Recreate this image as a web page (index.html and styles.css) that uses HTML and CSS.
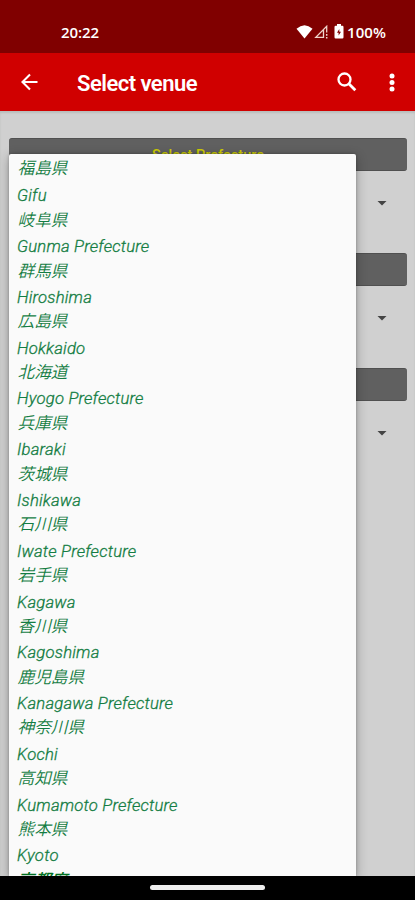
FILE: index.html
```html
<!DOCTYPE html>
<html lang="en">
<head>
<meta charset="utf-8">
<meta name="viewport" content="width=device-width">
<title>Select venue</title>
<link rel="stylesheet" href="styles.css">
</head>
<body>
<div class="screen">
  <header class="status">
    <span class="time">20:22</span>
    <div class="indicators">
      <svg class="wifi" viewBox="0 0 17 14"><path d="M.5 3.7Q8.500-3.300 16.500 3.700L8.500 13.500Z" fill="#fff"/></svg>
      <svg class="signal" viewBox="0 0 15 14"><path d="M9.500 5V12.300H1.800L12.700 1.300V7.500" fill="none" stroke="#efd5cb" stroke-width="1.300"/><path d="M12.700 9v1.800M12.700 11.900v1.500" stroke="#efd5cb" stroke-width="1.500"/></svg>
      <svg class="battery" viewBox="0 0 10 15"><path d="M3 0h4v1.700h1.300q1.200 0 1.200 1.200v10.400q0 1.200-1.200 1.200H1.700q-1.200 0-1.200-1.200V2.900q0-1.200 1.200-1.200H3z" fill="#fff"/><path d="M5.300 5L3 8.800h1.600v2.700L7 7.700H5.300z" fill="#800000"/></svg>
      <span class="percent">100%</span>
    </div>
  </header>
  <nav class="appbar">
    <svg class="back" viewBox="0 0 18 18"><path d="M17.500 9H2.500M10 1.500L2.500 9 10 16.500" fill="none" stroke="#fff" stroke-width="2.100"/></svg>
    <h1>Select venue</h1>
    <svg class="search" viewBox="0 0 20 20"><circle cx="7.500" cy="7.500" r="6" fill="none" stroke="#fff" stroke-width="2.300"/><path d="M11.800 11.800L18.300 18.300" stroke="#fff" stroke-width="2.800"/></svg>
    <svg class="more" viewBox="0 0 6 20"><circle cx="3" cy="4" r="2.500" fill="#fff"/><circle cx="3" cy="10.500" r="2.500" fill="#fff"/><circle cx="3" cy="17" r="2.500" fill="#fff"/></svg>
  </nav>
  <main class="content">
    <section class="field"><div class="label">Select Prefecture</div><div class="spinner"><i class="arrow"></i></div></section>
    <section class="field"><div class="label"></div><div class="spinner"><i class="arrow"></i></div></section>
    <section class="field"><div class="label"></div><div class="spinner"><i class="arrow"></i></div></section>
    <div class="dropdown">
      <ul class="options">
        <li class="partial"><span class="ja" lang="ja">福島県</span></li>
        <li><span class="en">Gifu</span><span class="ja" lang="ja">岐阜県</span></li>
        <li><span class="en">Gunma Prefecture</span><span class="ja" lang="ja">群馬県</span></li>
        <li><span class="en">Hiroshima</span><span class="ja" lang="ja">広島県</span></li>
        <li><span class="en">Hokkaido</span><span class="ja" lang="ja">北海道</span></li>
        <li><span class="en">Hyogo Prefecture</span><span class="ja" lang="ja">兵庫県</span></li>
        <li><span class="en">Ibaraki</span><span class="ja" lang="ja">茨城県</span></li>
        <li><span class="en">Ishikawa</span><span class="ja" lang="ja">石川県</span></li>
        <li><span class="en">Iwate Prefecture</span><span class="ja" lang="ja">岩手県</span></li>
        <li><span class="en">Kagawa</span><span class="ja" lang="ja">香川県</span></li>
        <li><span class="en">Kagoshima</span><span class="ja" lang="ja">鹿児島県</span></li>
        <li><span class="en">Kanagawa Prefecture</span><span class="ja" lang="ja">神奈川県</span></li>
        <li><span class="en">Kochi</span><span class="ja" lang="ja">高知県</span></li>
        <li><span class="en">Kumamoto Prefecture</span><span class="ja" lang="ja">熊本県</span></li>
        <li><span class="en">Kyoto</span><span class="ja last" lang="ja">京都府</span></li>
      </ul>
    </div>
  </main>
  <footer class="gesture"><div class="handle"></div></footer>
</div>
</body>
</html>
```

FILE: styles.css
```css
* { box-sizing: border-box; }
body { margin: 0; font-family: Roboto, "Noto Sans CJK JP", sans-serif; }
.screen { width: 415px; height: 900px; display: flex; flex-direction: column; overflow: hidden; }
.status { flex: none; height: 53px; background: #800000; color: #fff; display: flex; align-items: center; justify-content: space-between; padding: 10px 29px 0 61px; font-family: "Open Sans", sans-serif; font-size: 15px; font-weight: 600; line-height: 20px; }
.time { letter-spacing: -.1px; }
.indicators { display: flex; align-items: center; }
.wifi { width: 17px; height: 14px; }
.signal { width: 15px; height: 14px; margin-left: 1px; }
.battery { width: 10px; height: 15px; margin: 0 3px 0 5px; }
.percent { letter-spacing: .05px; }
.appbar { flex: none; height: 58px; background: #d00000; display: flex; align-items: center; padding: 0 20px; }
.back { width: 18px; height: 18px; }
h1 { margin: 3px auto 0 39px; color: #fff; font-size: 22px; font-weight: 600; line-height: 28px; letter-spacing: -.52px; white-space: nowrap; }
.search { width: 20px; height: 20px; margin-right: 32px; }
.more { width: 6px; height: 20px; }
.content { position: relative; flex: 1; min-height: 0; overflow: hidden; background: #d0d0d0; padding: 27px 8px 0 9px; box-shadow: inset 0 2px 2px #b9bdbb; }
.field { height: 115px; }
.label { height: 33px; border-radius: 3px; background: #606060; border-top: 1px solid #505050; border-bottom: 1px solid #505050; color: #cccc00; text-align: center; font-size: 14.500px; font-weight: 500; line-height: 33px; }
.spinner { height: 64px; display: flex; align-items: center; justify-content: flex-end; padding-right: 20px; }
.arrow { width: 10px; height: 5px; background: #444; clip-path: polygon(0 0, 100% 0, 50% 100%); }
.dropdown { position: absolute; left: 9px; top: 43px; width: 347px; bottom: 0; background: #fafafa; border-radius: 2px 2px 0 0; box-shadow: 0 3px 12px rgba(0, 0, 0, .3), 0 0 3px rgba(0, 0, 0, .25); overflow: hidden; }
.options { list-style: none; margin: 0; padding: 2px 0 0 8px; color: #147d43; font-style: italic; font-size: 16.700px; }
.options li { height: 50.780px; display: flex; flex-direction: column; }
.options .partial { height: 26.380px; }
.options span { white-space: nowrap; }
.en { height: 25.400px; line-height: 28.500px; font-weight: 300; letter-spacing: .2px; -webkit-text-stroke: .3px currentColor; }
.ja { height: 25.380px; line-height: 23px; font-family: "Noto Sans CJK JP", sans-serif; font-weight: 350; padding-left: .5px; }
.last { color: #007020; font-weight: 500; }
.gesture { flex: none; height: 24px; background: #000; display: flex; justify-content: center; padding-top: 9px; }
.handle { width: 115px; height: 5px; border-radius: 3px; background: #eee; }
```
